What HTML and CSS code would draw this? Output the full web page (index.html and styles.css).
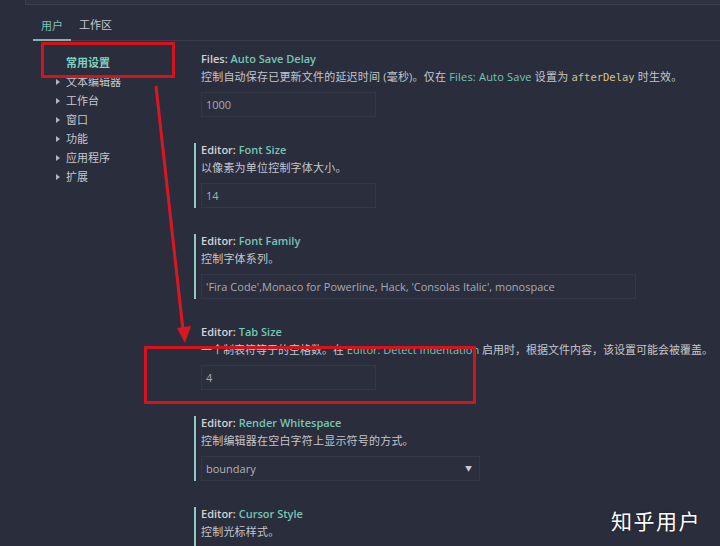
FILE: index.html
```html
<!DOCTYPE html>
<html lang="zh">
<head>
<meta charset="utf-8">
<link rel="stylesheet" href="styles.css">
</head>
<body>
<div class="page">
  <div class="search"></div>
  <div class="tabs">
    <span class="tab active">用户</span>
    <span class="tab">工作区</span>
  </div>
  <div class="main">
    <nav class="nav">
      <div class="nav-item top">常用设置</div>
      <div class="nav-item"><span class="caret"></span>文本编辑器</div>
      <div class="nav-item"><span class="caret"></span>工作台</div>
      <div class="nav-item"><span class="caret"></span>窗口</div>
      <div class="nav-item"><span class="caret"></span>功能</div>
      <div class="nav-item"><span class="caret"></span>应用程序</div>
      <div class="nav-item"><span class="caret"></span>扩展</div>
    </nav>
    <div class="settings">
      <div class="setting first">
        <div class="title"><b>Files: </b><span class="name">Auto Save Delay</span></div>
        <div class="desc">控制自动保存已更新文件的延迟时间 (毫秒)。仅在 <span class="name">Files: Auto Save</span> 设置为 <code>afterDelay</code> 时生效。</div>
        <div class="input w-s">1000</div>
      </div>
      <div class="setting mod">
        <div class="title"><b>Editor: </b><span class="name">Font Size</span></div>
        <div class="desc">以像素为单位控制字体大小。</div>
        <div class="input w-s">14</div>
      </div>
      <div class="setting mod">
        <div class="title"><b>Editor: </b><span class="name">Font Family</span></div>
        <div class="desc">控制字体系列。</div>
        <div class="input w-l">'Fira Code',Monaco for Powerline, Hack, 'Consolas Italic', monospace</div>
      </div>
      <div class="setting">
        <div class="title"><b>Editor: </b><span class="name">Tab Size</span></div>
        <div class="desc tight">一个制表符等于的空格数。在 <span class="name">Editor: Detect Indentation</span> 启用时，根据文件内容，该设置可能会被覆盖。</div>
        <div class="input w-s">4</div>
      </div>
      <div class="setting mod">
        <div class="title"><b>Editor: </b><span class="name">Render Whitespace</span></div>
        <div class="desc">控制编辑器在空白字符上显示符号的方式。</div>
        <div class="input select w-m"><span>boundary</span><span class="tri">▼</span></div>
      </div>
      <div class="setting mod">
        <div class="title"><b>Editor: </b><span class="name">Cursor Style</span></div>
        <div class="desc">控制光标样式。</div>
        <div class="input w-m"></div>
      </div>
    </div>
  </div>

  <div class="mark box1"></div>
  <div class="mark box2"></div>
  <svg class="arrow" width="720" height="546" viewBox="0 0 720 546">
    <line x1="156" y1="86" x2="183" y2="330" stroke="#dc1620" stroke-width="3"/>
    <polygon points="177,328 191,326 185,343" fill="#dc1620"/>
  </svg>
  <div class="watermark">知乎用户</div>
</div>
</body>
</html>
```
FILE: styles.css
```css
html, body {
  margin: 0;
  padding: 0;
}
body {
  background: #2a2d3b;
  font-family: "Open Sans", "Noto Sans CJK SC", sans-serif;
  font-size: 11px;
  color: #c4c6cc;
  overflow: hidden;
}
.page {
  position: relative;
  width: 720px;
  height: 546px;
  overflow: hidden;
}
.search {
  margin-left: 25px;
  height: 4px;
  background: #30333f;
  border-bottom: 1px solid #3b3e4c;
  border-left: 1px solid #3b3e4c;
}
.tabs {
  margin-left: 33px;
  height: 35px;
  display: flex;
  align-items: flex-end;
  border-bottom: 1px solid #3a3d4b;
  font-family: "Noto Sans CJK SC", sans-serif;
}
.tab {
  padding: 0 8px 8px 8px;
  line-height: 16px;
  color: #c8cad0;
}
.tab.active {
  color: #78c4b6;
  border-bottom: 2px solid #7cb7b0;
  padding-bottom: 6px;
  margin-bottom: -1px;
}
.main {
  display: grid;
  grid-template-columns: 194px 1fr;
}
.nav {
  padding-top: 12px;
  font-family: "Noto Sans CJK SC", sans-serif;
}
.nav-item {
  height: 19px;
  line-height: 19px;
  padding-left: 56px;
  display: flex;
  align-items: center;
  color: #c6c8ce;
}
.nav-item.top {
  padding-left: 66px;
  color: #7fd2c0;
  font-weight: bold;
}
.caret {
  width: 0;
  height: 0;
  border-left: 4px solid #b4b6bc;
  border-top: 3px solid transparent;
  border-bottom: 3px solid transparent;
  margin-right: 6px;
}
.settings {
  padding-top: 11px;
  display: flex;
  flex-direction: column;
  gap: 26px;
  min-width: 0;
}
.setting {
  border-left: 2px solid transparent;
  padding-left: 5px;
  min-height: 65px;
}
.setting.mod {
  border-left-color: #8fc8c4;
}
.title {
  line-height: 14px;
  color: #d2d3d7;
  white-space: nowrap;
}
.title b {
  font-weight: 600;
}
.name {
  color: #76c6b7;
}
.title .name {
  font-weight: 600;
}
.desc {
  margin-top: 3px;
  line-height: 16px;
  font-family: "Open Sans", "Noto Sans CJK SC", sans-serif;
  color: #c4c6cc;
  white-space: nowrap;
  letter-spacing: 0.2px;
}
.desc.tight {
  letter-spacing: 0;
}
code {
  font-family: "DejaVu Sans Mono", monospace;
  font-size: 10.5px;
  color: #d8c28a;
  letter-spacing: 0;
}
.input {
  margin-top: 7px;
  height: 23px;
  line-height: 23px;
  box-sizing: content-box;
  border: 1px solid #343747;
  background: #2b2e3c;
  padding: 0 4px;
  color: #a8abb3;
  font-size: 11px;
  white-space: nowrap;
  overflow: hidden;
}
.w-s { width: 165px; }
.w-m { width: 269px; }
.w-l { width: 425px; }
.select {
  display: flex;
  justify-content: space-between;
  color: #b0b3ba;
}
.tri {
  font-size: 7px;
  color: #c8cad0;
  padding-right: 3px;
}
.mark {
  position: absolute;
  border: 3px solid #d3141e;
  box-sizing: border-box;
}
.box1 {
  left: 41px;
  top: 42px;
  width: 134px;
  height: 36px;
}
.box2 {
  left: 144px;
  top: 346px;
  width: 332px;
  height: 58px;
}
.arrow {
  position: absolute;
  left: 0;
  top: 0;
}
.watermark {
  position: absolute;
  left: 611px;
  top: 506px;
  font-family: "Noto Sans CJK SC", sans-serif;
  font-size: 21px;
  line-height: 28px;
  color: #ffffff;
  letter-spacing: 1.5px;
  text-shadow: 0 0 2px rgba(0,0,0,0.5);
}
```
